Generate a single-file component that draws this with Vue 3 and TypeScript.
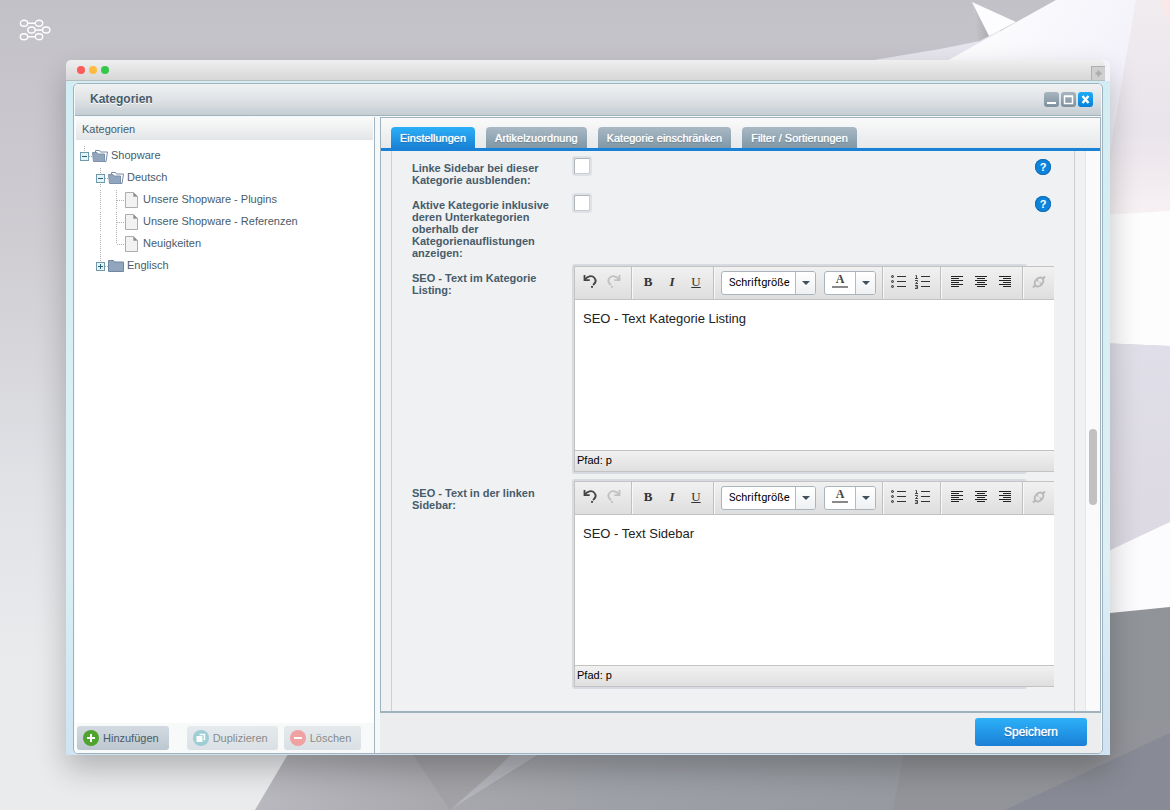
<script setup lang="ts">
import { ref } from 'vue'

interface TreeNode {
  label: string
  cells: string[]
  icon: 'open' | 'closed' | 'leaf'
}

const nodes: TreeNode[] = [
  { label: 'Shopware', cells: ['minus-root'], icon: 'open' },
  { label: 'Deutsch', cells: ['', 'minus'], icon: 'open' },
  { label: 'Unsere Shopware - Plugins', cells: ['', 'line', 'tee'], icon: 'leaf' },
  { label: 'Unsere Shopware - Referenzen', cells: ['', 'line', 'tee'], icon: 'leaf' },
  { label: 'Neuigkeiten', cells: ['', 'line', 'elbow'], icon: 'leaf' },
  { label: 'Englisch', cells: ['', 'plus'], icon: 'closed' },
]

const tabs = ['Einstellungen', 'Artikelzuordnung', 'Kategorie einschränken', 'Filter / Sortierungen']
const activeTab = ref(0)

const toggles = ref([
  { id: 'hide-sidebar', label: 'Linke Sidebar bei dieser Kategorie ausblenden:', checked: false },
  {
    id: 'show-active',
    label: 'Aktive Kategorie inklusive deren Unterkategorien oberhalb der Kategorienauflistungen anzeigen:',
    checked: false,
  },
])

const editors = ref([
  { id: 'seo-listing', label: 'SEO - Text im Kategorie Listing:', text: 'SEO - Text Kategorie Listing' },
  { id: 'seo-sidebar', label: 'SEO - Text in der linken Sidebar:', text: 'SEO - Text Sidebar' },
])
</script>

<template>
  <div class="desktop">
    <svg class="backdrop" viewBox="0 0 1170 810" preserveAspectRatio="none" aria-hidden="true">
      <defs>
        <linearGradient id="wall" x1="0" y1="0" x2="0" y2="1">
          <stop offset="0" stop-color="#c3c1c8" />
          <stop offset=".3" stop-color="#cfcdd2" />
          <stop offset=".6" stop-color="#e0e2e6" />
          <stop offset=".8" stop-color="#e9eaec" />
          <stop offset="1" stop-color="#e9ebec" />
        </linearGradient>
        <linearGradient id="shard" x1="0" y1="0" x2="1" y2="1">
          <stop offset="0" stop-color="#ffffff" />
          <stop offset=".5" stop-color="#f3f2fa" />
          <stop offset="1" stop-color="#dcdae4" />
        </linearGradient>
        <linearGradient id="rose" x1="0" y1="0" x2="0" y2="1">
          <stop offset="0" stop-color="#f1ecef" />
          <stop offset=".6" stop-color="#e9e4eb" />
          <stop offset="1" stop-color="#f8f1f4" />
        </linearGradient>
        <linearGradient id="lilac" x1="0" y1="0" x2="0" y2="1">
          <stop offset="0" stop-color="#e0dee8" />
          <stop offset="1" stop-color="#dcd9e3" />
        </linearGradient>
        <linearGradient id="steel" x1="0" y1="0" x2="1" y2="0">
          <stop offset="0" stop-color="#b8b8be" />
          <stop offset=".2" stop-color="#a8a8ad" />
          <stop offset=".4" stop-color="#9da0a6" />
          <stop offset="1" stop-color="#909398" />
        </linearGradient>
        <linearGradient id="spike" x1="0" y1="0" x2="1" y2="0">
          <stop offset="0" stop-color="#c9c9cd" />
          <stop offset="1" stop-color="#aeadb2" />
        </linearGradient>
      </defs>
      <rect width="1170" height="810" fill="url(#wall)" />
      <path d="M850 64 940 49 980 41 1000 30V90H850Z" fill="#e6e5ee" />
      <path d="M945 62 1056 0H1170V240L1100 330H945Z" fill="url(#shard)" />
      <path d="M972 2 989 36 978 41Z" fill="url(#spike)" />
      <path d="M972 2 1016 22 989 36Z" fill="#fdfdff" />
      <path d="M1136 0H1170V212L1105 216V180Z" fill="url(#rose)" />
      <path d="M1160 0H1170V26Z" fill="#f8e9e8" />
      <path d="M1100 215 1170 211V346L1100 343Z" fill="#fdfdfe" />
      <path d="M1100 343 1170 346V522L1100 555Z" fill="url(#lilac)" />
      <path d="M1100 555 1170 522V607L1100 615Z" fill="#fcfcff" />
      <path d="M320 700 1100 614 1170 607V810H255Z" fill="url(#steel)" />
      <path d="M390 720 450 810 600 720Z" fill="#a2a2a6" />
      <path d="M590 722 450 810 490 775 545 722Z" fill="#b4b4bc" />
      <path d="M910 720H1170V733L1005 810H893Z" fill="#939499" />
      <path d="M1170 733V810H1005Z" fill="#888b95" />
    </svg>

    <svg class="mark" viewBox="0 0 32 22" fill="none" stroke="#fff" stroke-width="1.4" aria-hidden="true">
      <ellipse cx="5" cy="4.300" rx="3.700" ry="3" />
      <ellipse cx="20" cy="4.300" rx="3.700" ry="3" />
      <ellipse cx="12.500" cy="11" rx="3.700" ry="3" />
      <ellipse cx="27.200" cy="11" rx="3.700" ry="3" />
      <ellipse cx="5" cy="17.700" rx="3.700" ry="3" />
      <ellipse cx="20" cy="17.700" rx="3.700" ry="3" />
      <path d="M8.700 4.300h7.600M16.200 11h7.300M8.700 17.700h7.600" />
    </svg>

    <div class="browser">
      <div class="browser-bar">
        <span class="dot red"></span><span class="dot amber"></span><span class="dot green"></span>
        <button class="new-tab" type="button" aria-label="Neuer Tab">
          <svg width="13" height="13" viewBox="0 0 13 13"><path d="M6.500 3.500v6M3.500 6.500h6" stroke="#a9a9a9" stroke-width="2" /></svg>
        </button>
      </div>
      <div class="viewport">
        <section class="app">
          <header class="app-head">
            <h1>Kategorien</h1>
            <div class="controls">
              <button type="button" aria-label="Minimieren">
                <svg viewBox="0 0 15 15"><path d="M3 11h9" stroke="#fff" stroke-width="2" /></svg>
              </button>
              <button type="button" aria-label="Maximieren">
                <svg viewBox="0 0 15 15"><path d="M3.500 4.500h8v7h-8zM3 4h9" fill="none" stroke="#fff" stroke-width="1.500" /></svg>
              </button>
              <button type="button" class="close" aria-label="Schließen">
                <svg viewBox="0 0 15 15"><path d="M4.500 4l6 7M10.500 4l-6 7" stroke="#fff" stroke-width="2.400" /></svg>
              </button>
            </div>
          </header>

          <div class="app-body">
            <aside class="side">
              <h2>Kategorien</h2>
              <ul class="tree">
                <li v-for="node in nodes" :key="node.label">
                  <svg v-for="(cell, i) in node.cells" :key="i" class="cell" viewBox="0 0 16 22">
                    <g stroke="#b0b0b0" stroke-dasharray="1 1" fill="none">
                      <path v-if="cell === 'minus-root'" d="M8.500 2v6" />
                      <path v-if="cell === 'minus' || cell === 'line' || cell === 'tee'" d="M8.500 2v20" />
                      <path v-if="cell === 'plus'" d="M8.500 0v8" />
                      <path v-if="cell === 'elbow'" d="M8.500 0v12" />
                      <path v-if="cell === 'tee' || cell === 'elbow'" d="M9 12.500h7" />
                      <path v-if="cell.startsWith('minus') || cell === 'plus'" d="M13 12.500h3" />
                    </g>
                    <g v-if="cell.startsWith('minus') || cell === 'plus'">
                      <rect x="4.500" y="8.500" width="8" height="8" fill="#e3f3f8" stroke="#6f9aae" />
                      <path d="M6 12.500h5" stroke="#2b6373" />
                      <path v-if="cell === 'plus'" d="M8.500 10v5" stroke="#2b6373" />
                    </g>
                  </svg>
                  <svg v-if="node.icon === 'leaf'" class="glyph" viewBox="0 0 16 22">
                    <path d="M1.500 4.500h8l4 4v11h-12z" fill="#f2f2f2" stroke="#adadad" />
                    <path d="M9.500 4.500v4h4z" fill="#8f8f8f" stroke="#9a9a9a" stroke-width=".5" />
                  </svg>
                  <svg v-else-if="node.icon === 'open'" class="glyph" viewBox="0 0 16 22">
                    <path d="M3.500 9V6.500h4l1 1.500h7l-1.500 9.500h-2" fill="#fff" stroke="#748ba5" />
                    <path d="M.500 8.500H5l1 1.500h6.500v7.500h-11z" fill="#91a5bd" stroke="#7c92ac" />
                  </svg>
                  <svg v-else class="glyph" viewBox="0 0 16 22">
                    <path d="M.500 6.500h5l1 1.500h9v9.500H.500z" fill="#91a5bd" stroke="#6f87a2" />
                  </svg>
                  <span>{{ node.label }}</span>
                </li>
              </ul>
              <div class="side-tools">
                <button type="button" class="add">
                  <svg viewBox="0 0 16 16"><circle cx="8" cy="8" r="8" fill="#4fa32f" /><path d="M8 4v8M4 8h8" stroke="#fff" stroke-width="2" /></svg>
                  Hinzufügen
                </button>
                <button type="button" class="muted">
                  <svg viewBox="0 0 16 16"><circle cx="8" cy="8" r="8" fill="#469fb0" /><path d="M6.500 4.500h5v5h-1" fill="none" stroke="#fff" stroke-width="1.500" /><rect x="3.500" y="6" width="6" height="6" fill="#fff" /></svg>
                  Duplizieren
                </button>
                <button type="button" class="muted">
                  <svg viewBox="0 0 16 16"><circle cx="8" cy="8" r="8" fill="#ea4a4a" /><path d="M4 8h8" stroke="#fff" stroke-width="2" /></svg>
                  Löschen
                </button>
              </div>
            </aside>

            <main class="detail">
              <div class="card">
                <nav class="tabs" role="tablist">
                  <button
                    v-for="(tab, i) in tabs"
                    :key="tab"
                    type="button"
                    role="tab"
                    :aria-selected="activeTab === i"
                    :class="{ active: activeTab === i }"
                    @click="activeTab = i"
                  >{{ tab }}</button>
                </nav>
                <div class="scroller">
                  <form class="fields" @submit.prevent>
                    <div v-for="item in toggles" :key="item.id" class="row">
                      <label :for="item.id">{{ item.label }}</label>
                      <input :id="item.id" v-model="item.checked" type="checkbox" />
                      <button type="button" class="help" aria-label="Hilfe">?</button>
                    </div>
                    <div v-for="item in editors" :key="item.id" class="row tall">
                      <label :for="item.id">{{ item.label }}</label>
                      <div class="editor">
                        <div class="editor-box">
                          <div class="toolbar">
                            <div class="group">
                              <button type="button" aria-label="Rückgängig">
                                <svg viewBox="0 0 24 24" fill="none" stroke="#444" stroke-width="1.800"><path d="M6.500 5v5.200h5.200" /><path d="M7 9.500C9 6 14 5 16.500 8c2 2.500 1 5-1.500 7" /><path d="M13 16.800h2" /></svg>
                              </button>
                              <button type="button" aria-label="Wiederholen">
                                <svg viewBox="0 0 24 24" fill="none" stroke="#c0c0c0" stroke-width="1.800"><path d="M17.500 5v5.200h-5.200" /><path d="M17 9.500C15 6 10 5 7.500 8c-2 2.500-1 5 1.500 7" /><path d="M9 16.800h2" /></svg>
                              </button>
                            </div>
                            <div class="group">
                              <button type="button" class="letter bold" aria-label="Fett">B</button>
                              <button type="button" class="letter italic" aria-label="Kursiv">I</button>
                              <button type="button" class="letter under" aria-label="Unterstrichen">U</button>
                            </div>
                            <div class="group wide">
                              <div class="picker">
                                <select aria-label="Schriftgröße"><option>Schriftgröße</option></select>
                                <span class="arrow"></span>
                              </div>
                              <button type="button" class="picker color" aria-label="Textfarbe">
                                <span class="swatch">A</span><span class="arrow"></span>
                              </button>
                            </div>
                            <div class="group">
                              <button type="button" aria-label="Aufzählung">
                                <svg viewBox="0 0 24 24" stroke="#333" fill="#999"><path d="M10 6.500h9M10 11.500h9M10 16.500h9" /><circle cx="5.500" cy="6.500" r="1" /><circle cx="5.500" cy="11.500" r="1" /><circle cx="5.500" cy="16.500" r="1" /></svg>
                              </button>
                              <button type="button" aria-label="Nummerierung">
                                <svg viewBox="0 0 24 24" stroke="#333" fill="none"><path d="M10 6.500h9M10 11.500h9M10 16.500h9" /><path d="M4.500 5.500h1v3M4 8.500h3M4 10.500h2.500v1L4.500 13.500H7M4 15.500h2.500v3H4M4.500 17h2" stroke-width=".900" /></svg>
                              </button>
                            </div>
                            <div class="group">
                              <button type="button" aria-label="Linksbündig">
                                <svg viewBox="0 0 24 24" stroke="#222"><path d="M6 6.500h12M6 8.500h8M6 10.500h12M6 12.500h8M6 14.500h12M6 16.500h8" /></svg>
                              </button>
                              <button type="button" aria-label="Zentriert">
                                <svg viewBox="0 0 24 24" stroke="#222"><path d="M6 6.500h12M8 8.500h8M6 10.500h12M8 12.500h8M6 14.500h12M8 16.500h8" /></svg>
                              </button>
                              <button type="button" aria-label="Rechtsbündig">
                                <svg viewBox="0 0 24 24" stroke="#222"><path d="M6 6.500h12M10 8.500h8M6 10.500h12M10 12.500h8M6 14.500h12M10 16.500h8" /></svg>
                              </button>
                            </div>
                            <div class="group last">
                              <button type="button" aria-label="Link">
                                <svg viewBox="0 0 24 24" fill="none" stroke="#b8b8b8" stroke-width="2"><ellipse cx="12" cy="12" rx="5" ry="3.600" transform="rotate(-48 12 12)" /><path d="M6 17.500l2-2M16 8.500l2-2" /><path d="M10 10.500l1.500 1M12.500 12.500l1.500 1" stroke-width="1.200" /></svg>
                              </button>
                            </div>
                          </div>
                          <textarea :id="item.id" v-model="item.text"></textarea>
                          <div class="path">Pfad: p</div>
                        </div>
                      </div>
                    </div>
                  </form>
                  <div class="track"><div class="thumb"></div></div>
                </div>
              </div>
              <footer class="actions"><button type="button" class="save">Speichern</button></footer>
            </main>
          </div>
        </section>
      </div>
    </div>
  </div>
</template>

<style>
body {
  margin: 0;
}
</style>

<style scoped>
* {
  box-sizing: border-box;
}
button,
select,
textarea,
input {
  font: inherit;
  color: inherit;
  margin: 0;
  padding: 0;
  border: 0;
  background: none;
}
svg {
  display: block;
}
.desktop {
  position: relative;
  display: flex;
  min-height: 100vh;
  padding: 60px 60px 55px 66px;
  overflow: hidden;
  font: 11px/14px "Liberation Sans", Arial, sans-serif;
  color: #475c6a;
}
.backdrop {
  position: absolute;
  inset: 0;
  width: 100%;
  height: 100%;
}
.mark {
  position: absolute;
  left: 19px;
  top: 19px;
  width: 32px;
  height: 22px;
}
.browser {
  position: relative;
  flex: 1;
  min-width: 0;
  display: flex;
  flex-direction: column;
  border-radius: 5px 5px 0 0;
  box-shadow: 0 14px 30px rgba(0, 0, 0, 0.24);
}
.browser-bar {
  display: flex;
  align-items: center;
  gap: 4px;
  height: 21px;
  margin-right: 5px;
  padding-left: 11px;
  border-bottom: 1px solid #b9bcbc;
  border-radius: 5px 5px 0 0;
  background: linear-gradient(#efefef, #d7d7d7);
}
.dot {
  width: 8px;
  height: 8px;
  border-radius: 50%;
}
.red {
  background: #fc5b57;
}
.amber {
  background: #fdbb40;
}
.green {
  background: #34c84a;
}
.new-tab {
  align-self: flex-end;
  margin-left: auto;
  border: 1px solid #b0b0b0;
  border-width: 1px 0 0 1px;
  background: #cfcfcf;
}
.viewport {
  flex: 1;
  display: flex;
  padding: 2px 7px 1px;
  background: linear-gradient(#d2edf3, #dcf0f5 70%, #cfe3f3);
}
.app {
  flex: 1;
  min-width: 0;
  display: flex;
  flex-direction: column;
  border: 1px solid #9fb2be;
  border-radius: 5px;
  background: #f6f9fa;
  overflow: hidden;
}
.app-head {
  display: flex;
  align-items: center;
  justify-content: space-between;
  height: 32px;
  margin: 0 1px;
  padding: 0 8px 2px 15px;
  border-bottom: 1px solid #9fb2be;
  background: linear-gradient(#f0f1f1, #dfe3e6 50%, #c5cdd3);
}
h1 {
  margin: 0;
  font-size: 12px;
  line-height: 16px;
  font-weight: bold;
  text-shadow: 0 1px 0 #fff;
}
.controls {
  display: flex;
  gap: 2px;
  padding-top: 2px;
}
.controls button {
  width: 15px;
  height: 15px;
  border-radius: 3px;
  background: linear-gradient(#a7b5bf, #7d919e);
}
.controls .close {
  background: linear-gradient(#1eabf8, #0780d8);
}
.app-body {
  flex: 1;
  display: flex;
  gap: 5px;
  padding: 1px 1px 0;
}
.side {
  width: 300px;
  flex: none;
  display: flex;
  flex-direction: column;
  padding-left: 1px;
  border-right: 1px solid #a2b4c0;
  background: #fff;
}
h2 {
  margin: 0 1px 0 0;
  height: 23px;
  padding-left: 6px;
  border-bottom: 1px solid #e2e4e5;
  font-size: 11px;
  line-height: 24px;
  font-weight: normal;
  background: linear-gradient(#fbfbfb, #e4e6e7);
}
.tree {
  flex: 1;
  margin: 0;
  padding: 4px 0 0;
  list-style: none;
}
.tree li {
  display: flex;
  height: 22px;
}
.tree span {
  padding-left: 3px;
  line-height: 22px;
}
.cell,
.glyph {
  width: 16px;
  height: 22px;
}
.side-tools {
  display: flex;
  gap: 6px;
  height: 30px;
  padding: 3px 1px;
  background: #f8fafa;
}
.side-tools button {
  display: flex;
  align-items: center;
  gap: 4px;
  padding: 0 10px 0 6px;
  border-radius: 3px;
  background: linear-gradient(#d3dae1, #bcc7cf);
}
.side-tools svg {
  width: 16px;
  height: 16px;
}
.side-tools .add {
  margin-right: 12px;
}
.side-tools .muted {
  opacity: 0.5;
  color: #111;
}
.detail {
  flex: 1;
  min-width: 0;
  display: flex;
  flex-direction: column;
  background: #ebedee;
}
.card {
  flex: 1;
  display: flex;
  flex-direction: column;
  border: 1px solid #9fb2be;
  border-bottom-width: 2px;
  background: #f0f1f3;
}
.tabs {
  display: flex;
  align-items: flex-end;
  gap: 11px;
  height: 33px;
  padding-left: 10px;
  border-bottom: 3px solid #1a82d6;
  background: linear-gradient(#fafafa, #e6e8ea);
}
.tabs button {
  height: 21px;
  padding: 0 9px;
  border-radius: 4px 4px 0 0;
  color: #fff;
  text-shadow: 0 0 1px #fff, 0 1px 1px rgba(60, 80, 95, 0.6);
  background: linear-gradient(#a9b9c4, #8097a6);
}
.tabs .active {
  background: linear-gradient(#2bb0f8, #1a82d6);
  text-shadow: 0 0 1px #fff, 0 1px 1px #0c5aa8;
}
.scroller {
  flex: 1;
  display: flex;
  justify-content: space-between;
}
.fields {
  flex: 1;
  min-width: 0;
  display: flex;
  flex-direction: column;
  gap: 5px;
  margin: 0 10px;
  padding: 5px 20px 0;
  border: 1px solid #cdd0d3;
  border-width: 0 1px;
}
.row {
  display: flex;
  align-items: flex-start;
}
.row:first-child {
  padding-bottom: 2px;
}
.row label {
  width: 160px;
  flex: none;
  padding: 6px 19px 0 0;
  font-weight: bold;
  line-height: 12px;
}
.tall label {
  padding-top: 8px;
}
input[type='checkbox'] {
  appearance: none;
  width: 20px;
  height: 20px;
  border: 2px solid #dee1e5;
  border-radius: 3px;
  background: #fff;
  box-shadow: inset 1px 1px 0 #b0b5ba, inset -1px -1px 0 #c9cdd1;
}
input[type='checkbox']:checked {
  background: #1a82d6;
}
.help {
  width: 16px;
  height: 16px;
  margin: 3px 3px 0 auto;
  border-radius: 50%;
  color: #fff;
  font-weight: bold;
  line-height: 16px;
  text-align: center;
  background: #0d84dc;
  box-shadow: inset 0 0 0 1px #146cb0;
}
.editor {
  position: relative;
  flex: 1;
  min-width: 0;
  padding: 2px 0 2px 2px;
}
.editor::before {
  content: '';
  position: absolute;
  inset: 0 27px 0 0;
  border-radius: 3px;
  background: #d7dae0;
}
.editor-box {
  position: relative;
  border: 1px solid #c3c3c3;
  border-right: 0;
  background: #fff;
}
.toolbar {
  display: flex;
  height: 33px;
  overflow: hidden;
  border-bottom: 1px solid #c3c3c3;
  background: linear-gradient(#f1f1f1, #dedede);
}
.group {
  display: flex;
  flex: none;
  padding: 3px 5px 0 3px;
  border-right: 1px solid #c0c0c0;
  border-left: 1px solid #f8f8f8;
}
.group:first-child {
  border-left: 0;
}
.group button:not(.picker) {
  width: 24px;
  height: 24px;
}
.group svg {
  width: 24px;
  height: 24px;
}
.wide {
  gap: 8px;
  padding: 4px 6px 0;
}
.last {
  border-right: 0;
  padding-right: 0;
}
.letter {
  font-family: "Liberation Serif", "Times New Roman", serif;
  font-size: 13px;
  line-height: 24px;
  color: #333;
  text-align: center;
}
.bold {
  font-weight: bold;
}
.italic {
  font-style: italic;
  font-weight: bold;
}
.under {
  text-decoration: underline;
}
.picker {
  display: flex;
  width: 95px;
  height: 24px;
  border: 1px solid #a9b4bc;
  border-radius: 3px;
  background: #fff;
  overflow: hidden;
}
.picker select {
  appearance: none;
  flex: 1;
  min-width: 0;
  padding-left: 7px;
  font: 11px/22px Roboto, "Noto Sans", sans-serif;
  color: #000;
}
.arrow {
  flex: none;
  width: 20px;
  height: 22px;
  border-left: 1px solid #b3bcc3;
  background: linear-gradient(#fff, #eef0f2);
  display: flex;
  align-items: center;
  justify-content: center;
}
.arrow::before {
  content: '';
  border: 4px solid transparent;
  border-top-color: #40505c;
  border-bottom: 0;
}
.color {
  width: 52px;
}
.swatch {
  flex: 1;
  height: 16px;
  margin: 0 7px;
  border-bottom: 2px solid #8a8a8a;
  font: bold 12px/15px "Liberation Serif", serif;
  color: #444;
}
textarea {
  display: block;
  width: 100%;
  height: 150px;
  padding: 11px 8px;
  resize: none;
  outline: 0;
  font-size: 13px;
  line-height: 16px;
  color: #222;
}
.path {
  height: 21px;
  padding-left: 2px;
  border-top: 1px solid #c3c3c3;
  line-height: 19px;
  color: #000;
  background: linear-gradient(#f1f1f1, #dfdfdf);
}
.track {
  flex: none;
  width: 15px;
  padding: 278px 3px 0 3px;
  border-left: 1px solid #e6e6e6;
  background: #fafafa;
}
.thumb {
  height: 76px;
  border-radius: 4px;
  background: #c1c1c1;
}
.actions {
  display: flex;
  justify-content: flex-end;
  padding: 5px 14px 7px;
}
.save {
  width: 112px;
  height: 28px;
  border-radius: 3px;
  font-size: 12px;
  color: #fff;
  text-shadow: 0 0 1px #fff, 0 1px 1px #0c5aa8;
  background: linear-gradient(#2cb1f8, #1a7fd6);
}
</style>
